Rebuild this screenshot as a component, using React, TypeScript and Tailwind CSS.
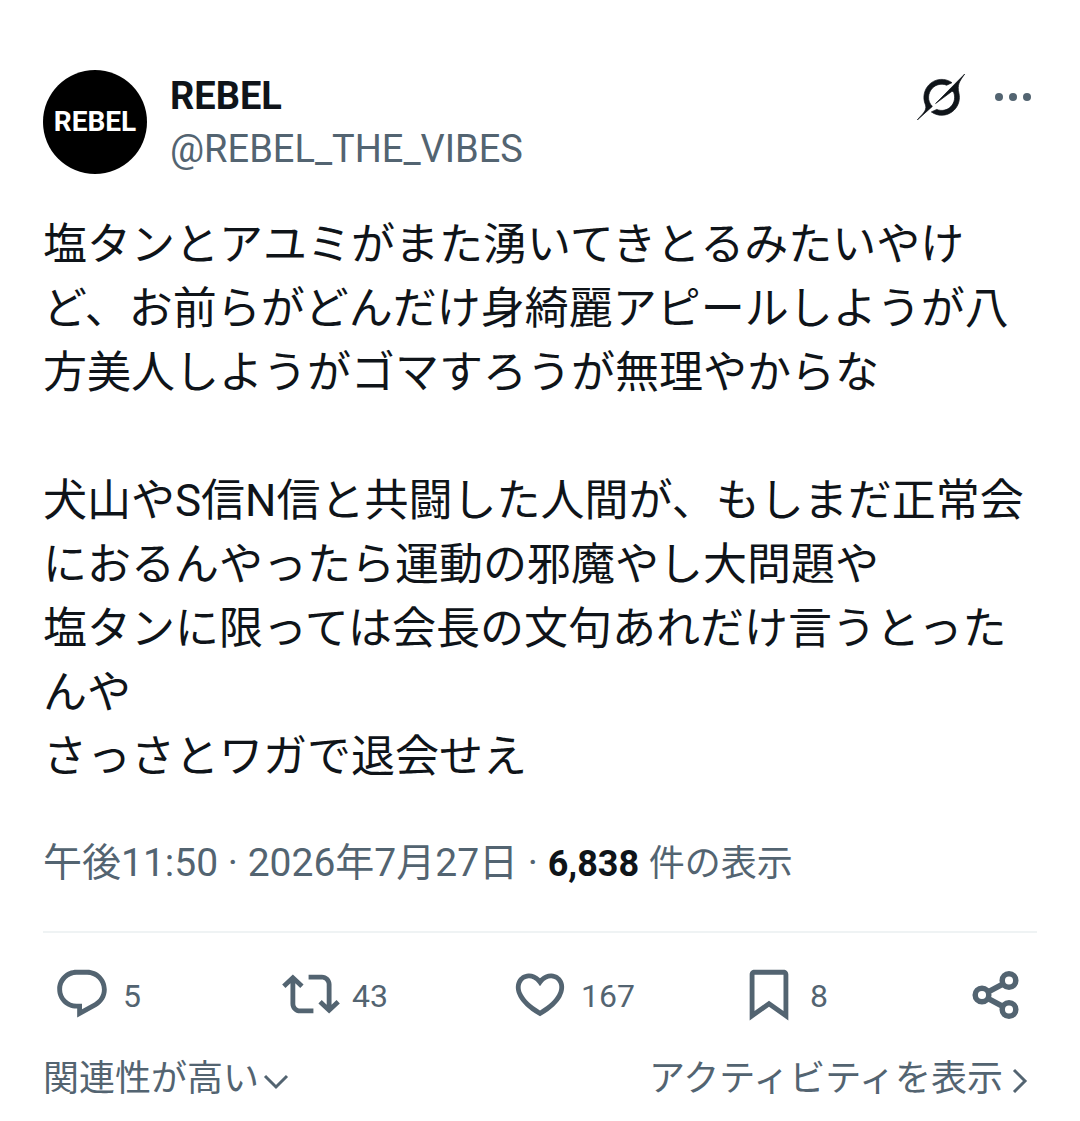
import React from 'react';

const body = `塩タンとアユミがまた湧いてきとるみたいやけど、お前らがどんだけ身綺麗アピールしようが八方美人しようがゴマすろうが無理やからな

犬山やS信N信と共闘した人間が、もしまだ正常会におるんやったら運動の邪魔やし大問題や
塩タンに限っては会長の文句あれだけ言うとったんや
さっさとワガで退会せえ`;

const actions = [
  {
    label: '返信',
    count: '5',
    path: 'M1.751 10c0-4.42 3.584-8 8.005-8h4.366c4.49 0 8.129 3.64 8.129 8.13 0 2.96-1.607 5.68-4.196 7.11l-8.054 4.46v-3.69h-.067c-4.49.1-8.183-3.51-8.183-8.01zm8.005-6c-3.317 0-6.005 2.69-6.005 6 0 3.37 2.77 6.08 6.138 6.01l.351-.01h1.761v2.3l5.087-2.81c1.951-1.08 3.163-3.13 3.163-5.36 0-3.39-2.744-6.13-6.129-6.13H9.756z',
  },
  {
    label: 'リポスト',
    count: '43',
    path: 'M4.5 3.88l4.432 4.14-1.364 1.46L5.5 7.55V16c0 1.1.896 2 2 2H13v2H7.5c-2.209 0-4-1.79-4-4V7.55L1.432 9.48.068 8.02 4.5 3.88zM16.5 6H11V4h5.5c2.209 0 4 1.79 4 4v8.45l2.068-1.93 1.364 1.46-4.432 4.14-4.432-4.14 1.364-1.46 2.068 1.93V8c0-1.1-.896-2-2-2z',
  },
  {
    label: 'いいね',
    count: '167',
    path: 'M16.697 5.5c-1.222-.06-2.679.51-3.89 2.16l-.805 1.09-.806-1.09C9.984 6.01 8.526 5.44 7.304 5.5c-1.243.07-2.349.78-2.91 1.91-.552 1.12-.633 2.78.479 4.82 1.074 1.97 3.257 4.27 7.129 6.61 3.87-2.34 6.052-4.64 7.126-6.61 1.111-2.04 1.03-3.7.477-4.82-.561-1.13-1.666-1.84-2.908-1.91zm4.187 7.69c-1.351 2.48-4.001 5.12-8.379 7.67l-.503.3-.504-.3c-4.379-2.55-7.029-5.19-8.382-7.67-1.36-2.5-1.41-4.86-.514-6.67.887-1.79 2.647-2.91 4.601-3.01 1.651-.09 3.368.56 4.798 2.01 1.429-1.45 3.146-2.1 4.796-2.01 1.954.1 3.714 1.22 4.601 3.01.896 1.81.846 4.17-.514 6.67z',
  },
  {
    label: 'ブックマーク',
    count: '8',
    path: 'M4 3.9C4 2.8 4.9 2 6 2h12c1.1 0 2 .8 2 1.9v19.04l-8-5.71-8 5.71V3.9zM6 4v15.06l6-4.29 6 4.29V4H6z',
  },
];

function Header() {
  return (
    <header className="flex items-start">
      <div className="flex size-[104px] shrink-0 items-center justify-center rounded-full bg-black text-[28px] font-bold text-white">
        REBEL
      </div>
      <div className="ml-[23px] flex-1 text-[38px] leading-[53px]">
        <h1 className="font-bold">REBEL</h1>
        <p className="text-[#536471]">@REBEL_THE_VIBES</p>
      </div>
      <div className="flex items-center gap-6 pt-1">
        <button type="button" aria-label="Grok">
          <svg
            viewBox="0 0 33 32"
            className="h-[46px] w-[48px]"
            fill="currentColor"
            stroke="currentColor"
            strokeWidth="0.5"
          >
            <path d="M12.745 20.54l10.97-8.19c.539-.4 1.307-.244 1.564.38 1.349 3.288.746 7.241-1.938 9.955-2.683 2.714-6.417 3.31-9.83 1.954l-3.728 1.745c5.347 3.697 11.84 2.782 15.898-1.324 3.219-3.255 4.216-7.692 3.284-11.693l.008.009c-1.351-5.878.332-8.227 3.782-13.031L33 0l-4.54 4.59v-.014L12.743 20.544m-2.263 1.987c-3.837-3.707-3.175-9.446.1-12.755 2.42-2.449 6.388-3.448 9.852-1.979l3.72-1.737c-.67-.49-1.53-1.017-2.515-1.387-4.455-1.854-9.789-.931-13.41 2.728-3.483 3.523-4.579 8.94-2.697 13.561 1.405 3.454-.899 5.898-3.22 8.364C1.49 30.2.666 31.074 0 32l10.478-9.466" />
          </svg>
        </button>
        <button type="button" aria-label="もっと見る" className="text-[#536471]">
          <svg viewBox="0 0 48 46" className="h-[46px] w-[48px]" fill="currentColor">
            <circle cx="10" cy="23" r="4" />
            <circle cx="24" cy="23" r="4" />
            <circle cx="38" cy="23" r="4" />
          </svg>
        </button>
      </div>
    </header>
  );
}

function Actions() {
  return (
    <div className="flex px-[10px] pt-[30px] text-[32px] leading-[58px]">
      {actions.map((action) => (
        <div key={action.label} className="flex-1">
          <button type="button" aria-label={action.label} className="flex items-center gap-3">
            <svg viewBox="0 0 24 24" className="size-[58px]" fill="currentColor">
              <path d={action.path} />
            </svg>
            <span className="pt-1">{action.count}</span>
          </button>
        </div>
      ))}
      <button type="button" aria-label="共有">
        <svg viewBox="0 0 58 58" className="size-[58px]" fill="none" stroke="currentColor" strokeWidth="5.5">
          <circle cx="13" cy="30" r="6.8" />
          <circle cx="40" cy="15.5" r="6.8" />
          <circle cx="40" cy="44.5" r="6.8" />
          <path d="M19 27L34 19M19 33.5L34 41.5" />
        </svg>
      </button>
    </div>
  );
}

export default function App() {
  return (
    <article
      lang="ja"
      className="min-h-screen bg-white px-[43px] pt-[70px] pb-4 font-['Roboto','Noto_Sans_CJK_JP',sans-serif] text-[#0f1419]"
    >
      <Header />
      <p className="mt-[37px] text-[44px] leading-[64px] whitespace-pre-wrap">{body}</p>
      <div className="mt-12 border-b-2 border-[#eff3f4] pb-10 text-[39px] leading-[53px] text-[#536471]">
        <time>午後11:50 · 2026年7月27日</time> ·{' '}
        <strong className="text-[36px] font-bold text-[#0f1419]">6,838</strong>{' '}
        <span className="text-[36px]">件の表示</span>
      </div>
      <div className="text-[#536471]">
        <Actions />
        <div className="mt-7 flex items-center justify-between text-[36px] leading-[53px]">
          <button type="button" className="flex items-center gap-1">
            関連性が高い
            <svg viewBox="0 0 26 26" className="size-[26px]" fill="none" stroke="currentColor" strokeWidth="3">
              <path d="M2 9L13 20L24 9" />
            </svg>
          </button>
          <a href="#activity" className="flex items-center gap-1 pr-1">
            アクティビティを表示
            <svg viewBox="0 0 26 26" className="size-[26px]" fill="none" stroke="currentColor" strokeWidth="3">
              <path d="M7 3L18 14L7 25" />
            </svg>
          </a>
        </div>
      </div>
    </article>
  );
}
